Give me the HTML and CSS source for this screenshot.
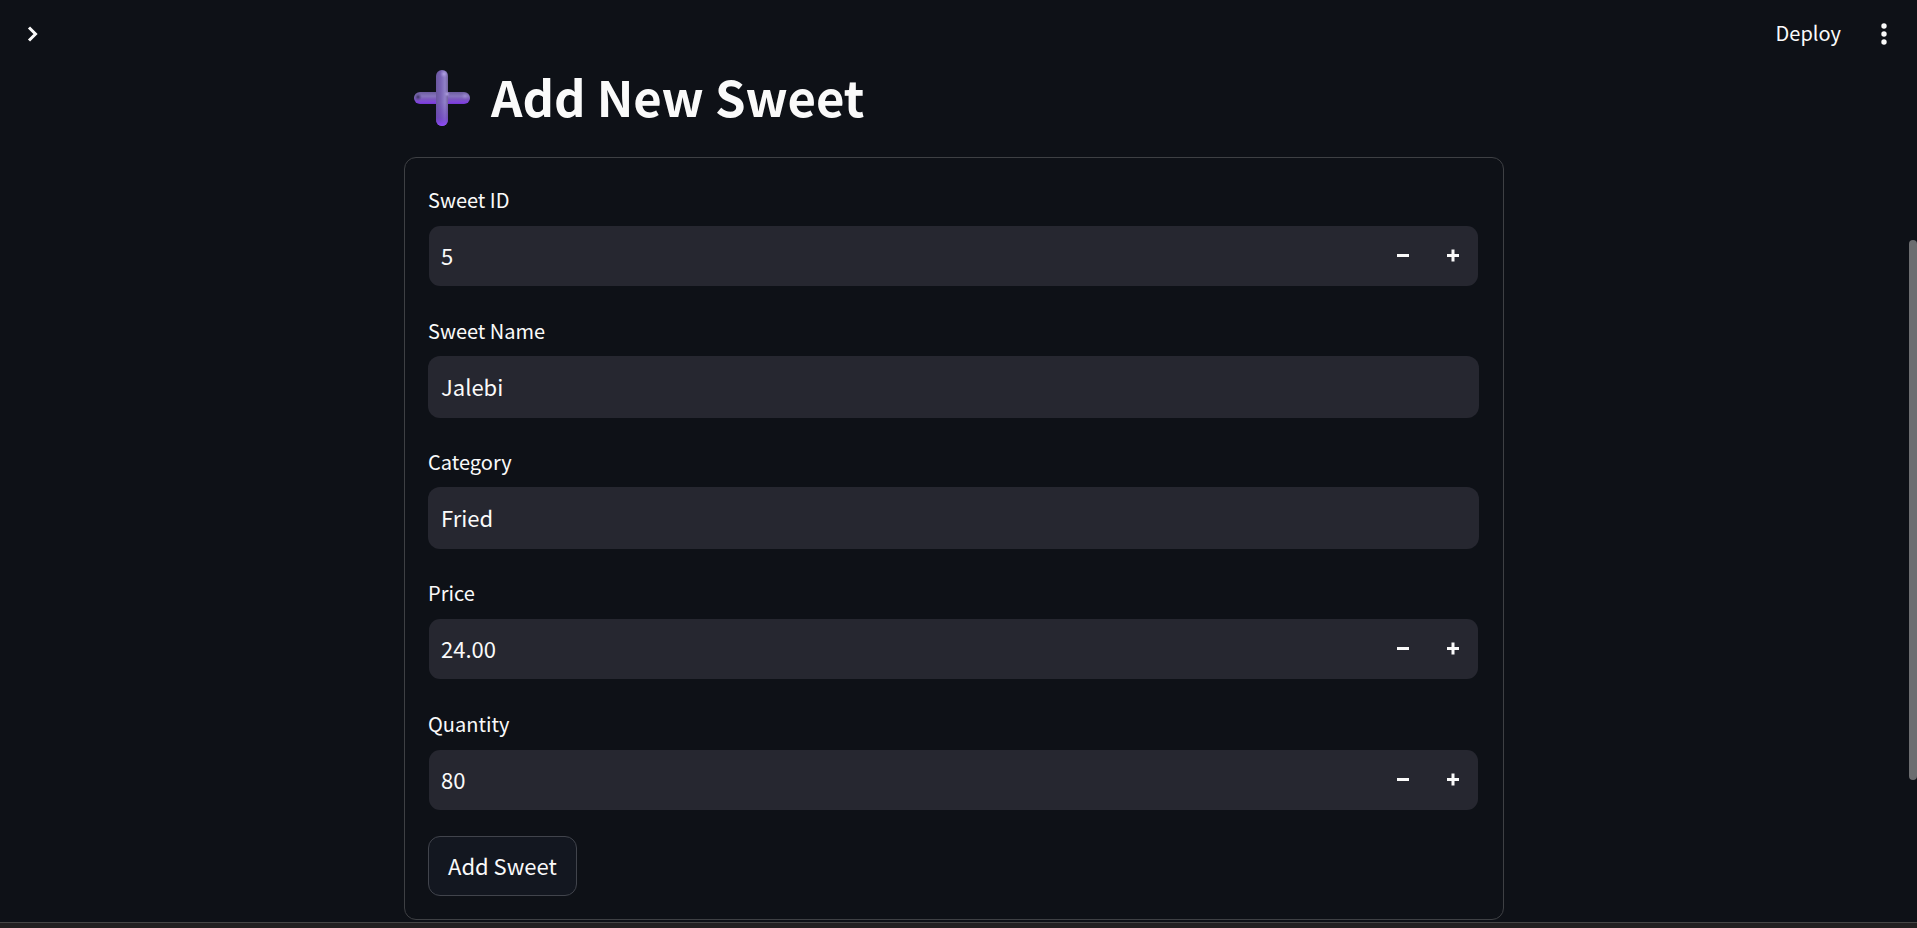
FILE: index.html
```html
<!DOCTYPE html>
<html lang="en">
<head>
<meta charset="utf-8">
<title>Add New Sweet</title>
<link rel="stylesheet" href="styles.css">
</head>
<body>
<div class="app">
  <header class="toolbar">
    <button class="icon-button" type="button" aria-label="Open sidebar">
      <svg width="12" height="16" viewBox="0 0 12 16" fill="none" stroke="#fafafa" stroke-width="3"><path d="M2 1.5 8.5 8 2 14.5"/></svg>
    </button>
    <div class="toolbar-actions">
      <button class="deploy" type="button">Deploy</button>
      <button class="icon-button" type="button" aria-label="Main menu">
        <svg width="6" height="22" viewBox="0 0 6 22" fill="#fafafa"><circle cx="3" cy="3" r="2.7"/><circle cx="3" cy="11" r="2.7"/><circle cx="3" cy="19" r="2.7"/></svg>
      </button>
    </div>
  </header>
  <main class="content">
    <h1 class="title">
      <svg class="title-icon" width="56" height="56" viewBox="0 0 56 56" aria-hidden="true">
        <defs>
          <linearGradient id="bar-h" x1="0" y1="0" x2="0" y2="1"><stop offset="0" stop-color="#6d5da0"/><stop offset=".35" stop-color="#8674bd"/><stop offset=".6" stop-color="#7b58bd"/><stop offset=".85" stop-color="#8044dc"/><stop offset="1" stop-color="#7437d2"/></linearGradient>
          <linearGradient id="bar-v" x1="0" y1="0" x2="1" y2="0"><stop offset="0" stop-color="#6a579f"/><stop offset=".4" stop-color="#7963b5"/><stop offset=".75" stop-color="#9181c9"/><stop offset="1" stop-color="#75649f"/></linearGradient>
          <linearGradient id="foot" x1="0" y1="0" x2="0" y2="1"><stop offset=".58" stop-color="#6430bf" stop-opacity="0"/><stop offset=".85" stop-color="#6b35c9" stop-opacity=".45"/><stop offset="1" stop-color="#9248ff"/></linearGradient>
          <radialGradient id="shine"><stop offset="0" stop-color="#b3a3e6"/><stop offset="1" stop-color="#9b8bd0" stop-opacity="0"/></radialGradient>
          <radialGradient id="shade"><stop offset="0" stop-color="#3c3161"/><stop offset="1" stop-color="#514280" stop-opacity="0"/></radialGradient>
        </defs>
        <rect x="0" y="22" width="56" height="12" rx="6" fill="url(#bar-h)"/>
        <circle cx="4" cy="27" r="4" fill="url(#shade)"/>
        <circle cx="51" cy="26" r="4" fill="url(#shine)" opacity=".5"/>
        <rect x="22" y="0" width="12" height="56" rx="6" fill="url(#bar-v)"/>
        <rect x="22" y="0" width="12" height="56" rx="6" fill="url(#foot)"/>
        <circle cx="30" cy="4" r="4" fill="url(#shine)"/>
        <circle cx="33" cy="24" r="3" fill="url(#shine)"/>
      </svg>
      <span class="title-text">Add New Sweet</span>
    </h1>
    <form class="card">
      <div class="field">
        <label for="sweet-id">Sweet ID</label>
        <div class="control number">
          <input id="sweet-id" type="text" inputmode="numeric" value="5">
          <button class="step" type="button" aria-label="Decrease sweet ID"><svg width="12" height="14" viewBox="0 0 12 14" fill="#fafafa"><path d="M0 5h12v3H0z"/></svg></button>
          <button class="step" type="button" aria-label="Increase sweet ID"><svg width="12" height="14" viewBox="0 0 12 14" fill="#fafafa"><path d="M4.5 .5h3V5H12v3H7.500v4.500h-3V8H0V5h4.500z"/></svg></button>
        </div>
      </div>
      <div class="field">
        <label for="sweet-name">Sweet Name</label>
        <div class="control"><input id="sweet-name" type="text" value="Jalebi"></div>
      </div>
      <div class="field">
        <label for="category">Category</label>
        <div class="control"><input id="category" type="text" value="Fried"></div>
      </div>
      <div class="field">
        <label for="price">Price</label>
        <div class="control number">
          <input id="price" type="text" inputmode="decimal" value="24.00">
          <button class="step" type="button" aria-label="Decrease price"><svg width="12" height="14" viewBox="0 0 12 14" fill="#fafafa"><path d="M0 5h12v3H0z"/></svg></button>
          <button class="step" type="button" aria-label="Increase price"><svg width="12" height="14" viewBox="0 0 12 14" fill="#fafafa"><path d="M4.5 .5h3V5H12v3H7.500v4.500h-3V8H0V5h4.500z"/></svg></button>
        </div>
      </div>
      <div class="field">
        <label for="quantity">Quantity</label>
        <div class="control number">
          <input id="quantity" type="text" inputmode="numeric" value="80">
          <button class="step" type="button" aria-label="Decrease quantity"><svg width="12" height="14" viewBox="0 0 12 14" fill="#fafafa"><path d="M0 5h12v3H0z"/></svg></button>
          <button class="step" type="button" aria-label="Increase quantity"><svg width="12" height="14" viewBox="0 0 12 14" fill="#fafafa"><path d="M4.500 .5h3V5H12v3H7.500v4.500h-3V8H0V5h4.500z"/></svg></button>
        </div>
      </div>
      <button class="submit" type="submit">Add Sweet</button>
    </form>
  </main>
  <div class="bottom-edge"></div>
  <div class="scroll-thumb"></div>
</div>
</body>
</html>
```
FILE: styles.css
```css
* { box-sizing: border-box; }

body {
  margin: 0;
  background: #0e1117;
  color: #fafafa;
  font-family: "Noto Sans CJK SC", "Noto Sans", sans-serif;
}

button, input {
  margin: 0;
  padding: 0;
  border: 0;
  background: none;
  color: inherit;
  font: inherit;
}

svg { display: block; }

.app {
  position: relative;
  display: flex;
  flex-direction: column;
  height: 100vh;
  overflow: hidden;
}

.toolbar {
  display: flex;
  justify-content: space-between;
  align-items: center;
  flex: none;
  height: 68px;
  padding: 0 19px;
}

.toolbar-actions {
  display: flex;
  align-items: center;
  gap: 29px;
}

.icon-button {
  display: flex;
  justify-content: center;
  align-items: center;
  width: 28px;
  height: 40px;
}

.deploy {
  padding-bottom: 2px;
  font-size: 20px;
  line-height: 32px;
}

.content {
  flex: 1;
  min-height: 0;
  padding-right: 9px;
}

.title {
  display: flex;
  align-items: center;
  gap: 21px;
  width: 100%;
  max-width: 1100px;
  height: 60px;
  margin: 0 auto 29px;
  padding-left: 10px;
  font-size: 49px;
  line-height: 60px;
  font-weight: 700;
}

.title-icon { flex: none; }

.title-text { padding-bottom: 4px; }

.card {
  display: flex;
  flex-direction: column;
  align-items: flex-start;
  gap: 25px;
  width: 100%;
  max-width: 1100px;
  margin: 0 auto;
  padding: 23px 24px 23px 23px;
  border: 1px solid #3e4044;
  border-radius: 12px;
}

.field {
  display: flex;
  flex-direction: column;
  width: 100%;
}

.field label {
  height: 44px;
  font-size: 20px;
  line-height: 38px;
}

.control {
  display: flex;
  height: 62px;
  padding-left: 13px;
  border-radius: 12px;
  background: #262730;
}

.control input {
  flex: 1;
  min-width: 0;
  padding-bottom: 2px;
  font-size: 22px;
  outline: 0;
}

.number {
  padding: 0 0 0 12px;
  border: 1px solid transparent;
  background-clip: padding-box;
}

.step {
  display: flex;
  justify-content: center;
  align-items: center;
  width: 50px;
}

.submit {
  height: 60px;
  padding: 0 19px 2px;
  border: 1px solid #41444c;
  border-radius: 12px;
  background: #131720;
  font-size: 22px;
}

.bottom-edge {
  flex: none;
  height: 6px;
  border-top: 1px solid #464646;
  background: #222021;
}

.scroll-thumb {
  position: absolute;
  top: 240px;
  right: 0;
  width: 8px;
  height: 540px;
  border-radius: 4px;
  background: #6c6d70;
}
```
